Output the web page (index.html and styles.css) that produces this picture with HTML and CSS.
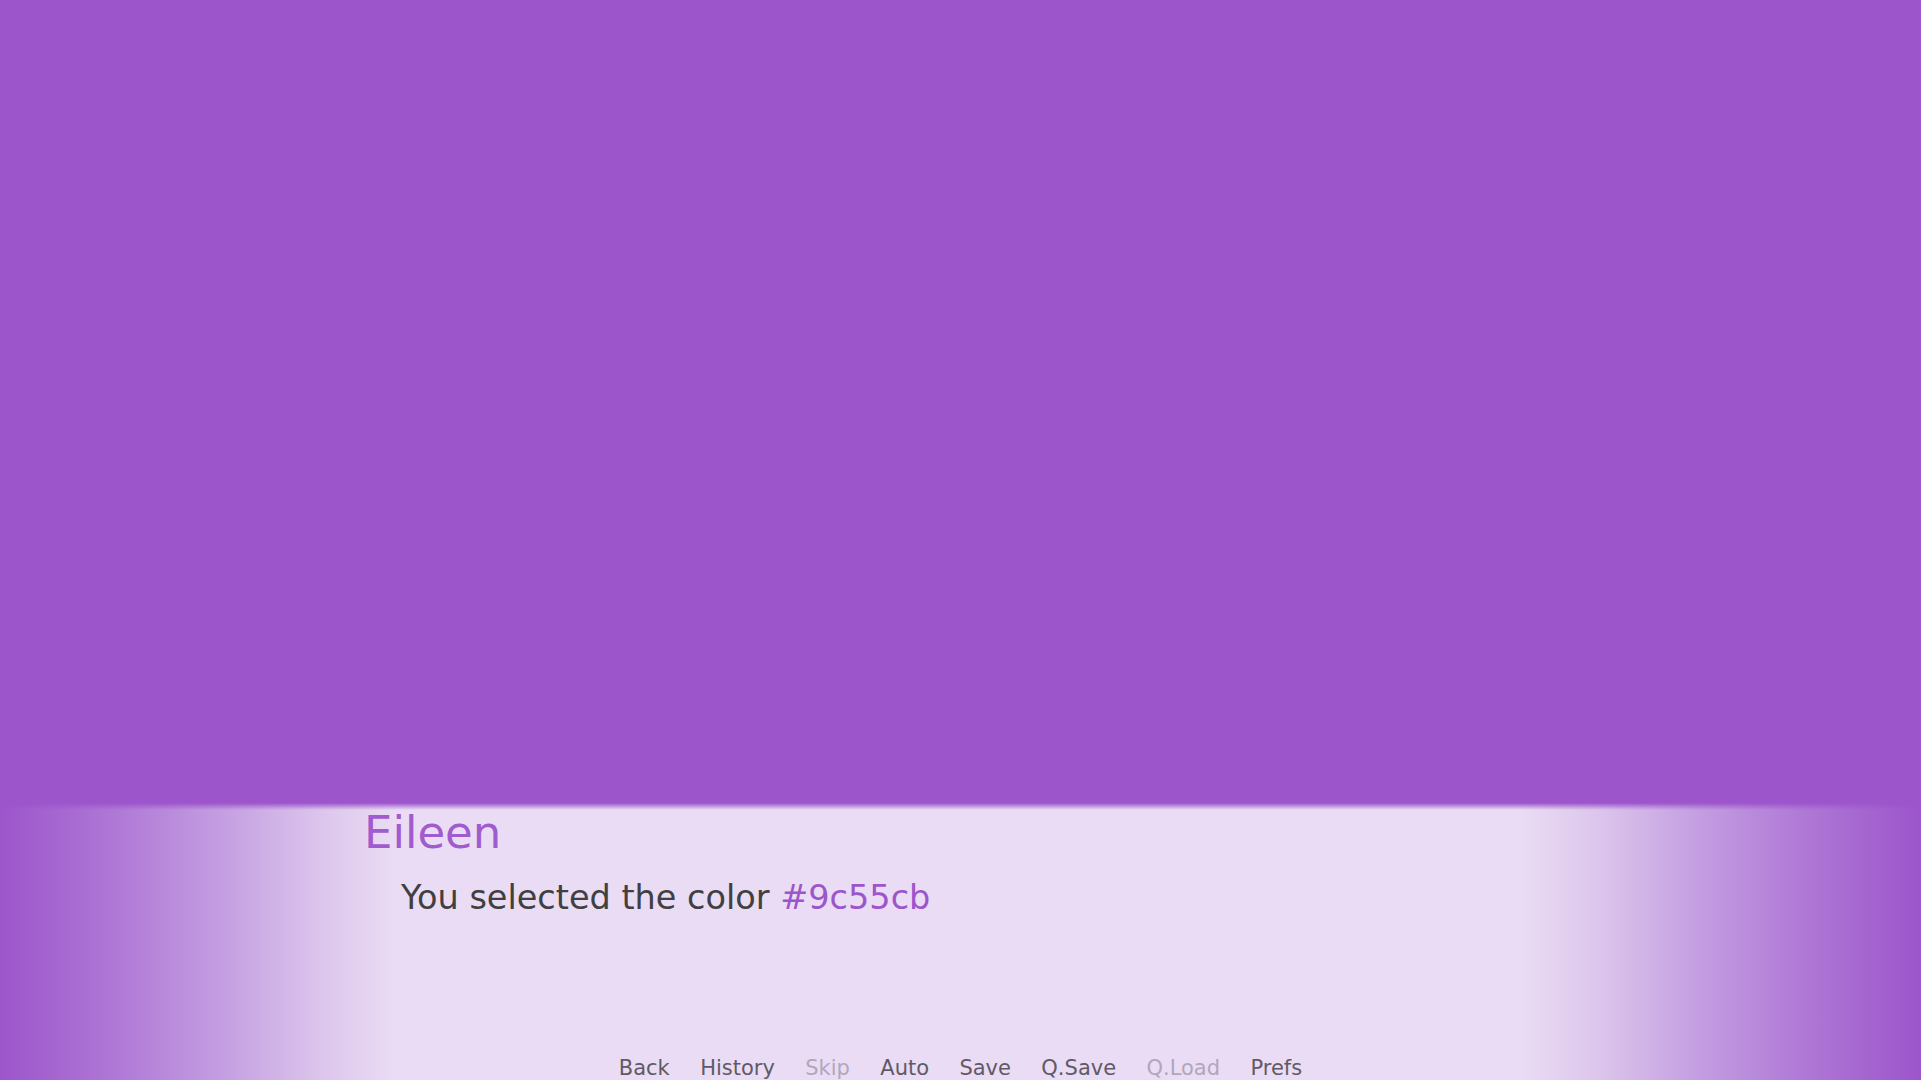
FILE: index.html
```html
<!DOCTYPE html>
<html lang="en">
<head>
<meta charset="utf-8">
<title>Eileen</title>
<link rel="stylesheet" href="styles.css">
</head>
<body>
<div class="screen">
  <div class="scene"></div>
  <div class="textbox">
    <div class="namebox">Eileen</div>
    <div class="dialogue">You selected the color <span class="accent">#9c55cb</span></div>
    <nav class="quick-menu">
      <span class="qbtn">Back</span>
      <span class="qbtn">History</span>
      <span class="qbtn disabled">Skip</span>
      <span class="qbtn">Auto</span>
      <span class="qbtn">Save</span>
      <span class="qbtn">Q.Save</span>
      <span class="qbtn disabled">Q.Load</span>
      <span class="qbtn">Prefs</span>
    </nav>
  </div>
</div>
</body>
</html>
```

FILE: styles.css
```css
html, body {
  margin: 0;
  padding: 0;
  background: #9c55cb;
}

.screen {
  width: 1921px;
  height: 1080px;
  display: flex;
  flex-direction: column;
  font-family: "DejaVu Sans", "Liberation Sans", sans-serif;
  overflow: hidden;
}

.scene {
  flex: 1;
  background: #9c55cb;
}

.textbox {
  height: 277px;
  display: flex;
  flex-direction: column;
  background:
    linear-gradient(to bottom, #9c55cb 0px, rgba(156, 85, 203, 0.55) 3px, rgba(234, 220, 244, 0) 7px) top left / 100% 8px no-repeat,
    linear-gradient(to right, #9c55cb 0px, #ae76d5 110px, #c39de1 220px, #dcc5ec 320px, #eadcf4 395px, #eadcf4 1521px, #dcc5ec 1600px, #c39de1 1700px, #ae76d5 1810px, #9c55cb 1921px);
}

.namebox {
  padding: 4px 0 0 364px;
  font-size: 45px;
  line-height: 52px;
  color: #a05bce;
}

.dialogue {
  margin-top: 19px;
  padding-left: 401px;
  font-size: 33.5px;
  line-height: 40px;
  color: #404040;
}

.accent {
  color: #9c55cb;
}

.quick-menu {
  margin-top: auto;
  display: flex;
  justify-content: center;
  font-size: 21px;
  line-height: 23px;
}

.qbtn {
  padding: 0 15.2px;
  color: #605a66;
}

.qbtn.disabled {
  color: #b1a7ba;
}
```
